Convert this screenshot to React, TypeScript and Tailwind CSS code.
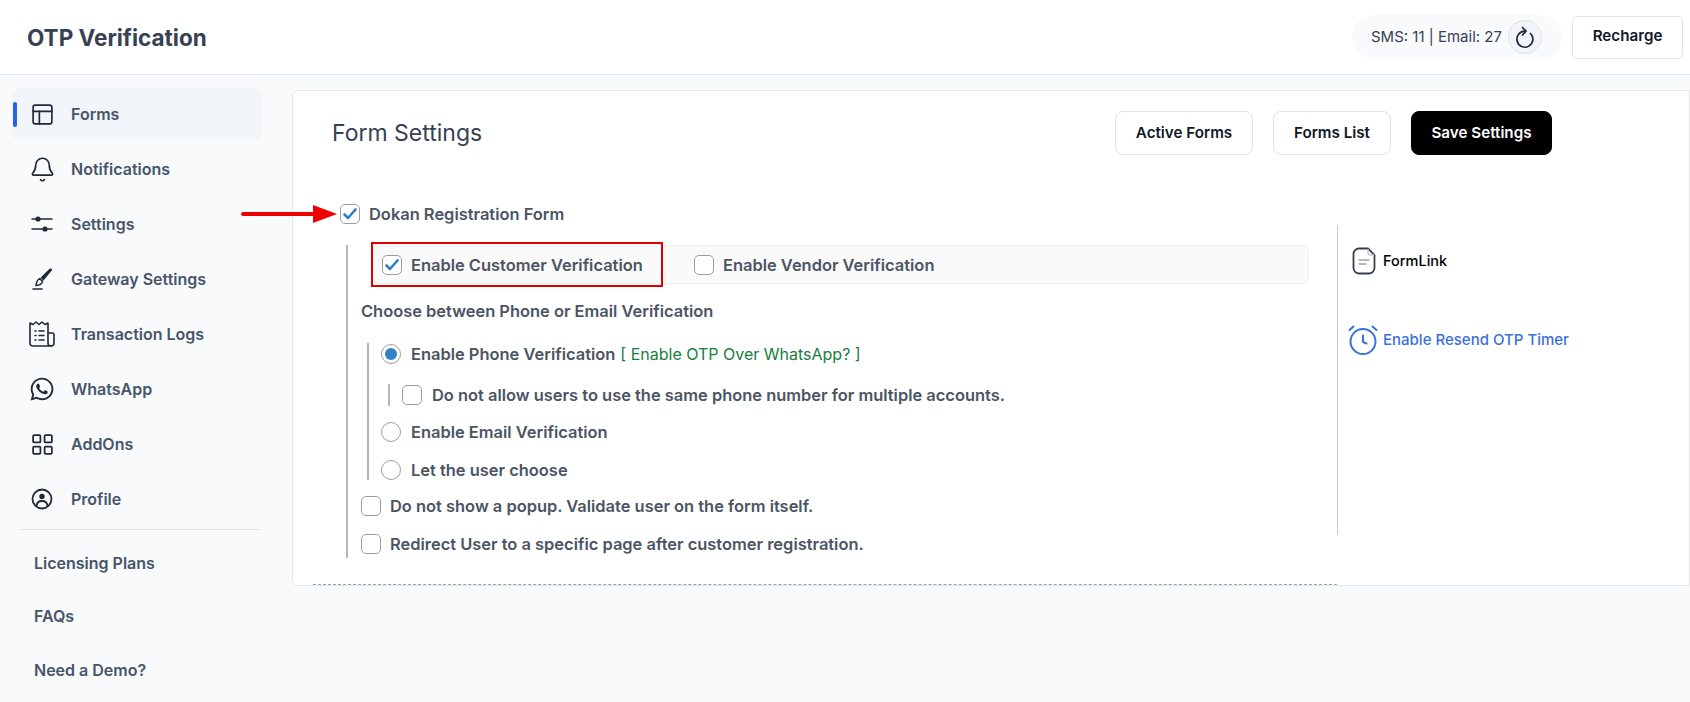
import React from "react";
import { Bell, LayoutGrid, PanelsTopLeft } from "lucide-react";
import { FaWhatsapp } from "react-icons/fa";

const Sliders = () => (
  <svg width="22" height="22" viewBox="0 0 22 22" fill="none" stroke="#1f2937" strokeWidth="1.5" strokeLinecap="round">
    <path d="M1 6h20M1 16h20" />
    <circle cx="7" cy="6" r="2.6" fill="#1f2937" stroke="none" />
    <circle cx="14" cy="16" r="2.6" fill="#1f2937" stroke="none" />
  </svg>
);
const Brush = () => (
  <svg width="22" height="22" viewBox="0 0 22 22" fill="none">
    <path d="M20 0.5c1 .5 1.3 1.2.8 2L12.5 12.5 9.5 9.8 18.3 1c.5-.4 1-.7 1.7-.5z" fill="#1f2937" />
    <path d="M8.6 10.6l3 2.8c-.6 2.4-3 4-6.6 4.1.4-3 1.4-6 3.6-6.9z" fill="none" stroke="#1f2937" strokeWidth="1.5" strokeLinejoin="round" />
    <path d="M2 21h9" stroke="#1f2937" strokeWidth="1.6" strokeLinecap="round" />
  </svg>
);
const Receipt = () => (
  <svg width="28" height="28" viewBox="0 0 28 28" fill="none" stroke="#1f2937" strokeWidth="1.6" strokeLinecap="round" strokeLinejoin="round">
    <path d="M2 3v20a3 3 0 0 0 3 3h18a3 3 0 0 1-3-3V3l-3 1.5L14 2l-3 2.5L8 2 5 4.500z" />
    <path d="M20 13h4.500a1.500 1.500 0 0 1 1.500 1.500V23a3 3 0 0 1-3 3" />
    <path d="M7 11h1M11 11h5M7 15.500h1M11 15.500h5M7 20h1M11 20h5" />
  </svg>
);
const Profile = () => (
  <svg width="22" height="22" viewBox="0 0 22 22" fill="none" stroke="#1f2937" strokeWidth="1.8">
    <circle cx="11" cy="11" r="9.500" />
    <circle cx="11" cy="8.500" r="1.800" fill="#1f2937" />
    <path d="M5.500 18c.3-3.500 2.500-5 5.500-5s5.200 1.500 5.500 5" />
  </svg>
);
const Refresh = () => (
  <svg width="24" height="24" viewBox="0 0 24 24" fill="none" stroke="#1f2937" strokeWidth="1.700" strokeLinecap="round" strokeLinejoin="round">
    <path d="M17.500 8.500A8 8 0 1 1 12 6.200" />
    <path d="M9.500 2.500L13 6.200 9.500 10" />
  </svg>
);
const FileIcon = () => (
  <svg width="24" height="28" viewBox="0 0 24 28" fill="none" className="shrink-0">
    <path d="M7 1.500h9l6.500 6.500v13a5.500 5.500 0 0 1-5.500 5.500H7A5.500 5.500 0 0 1 1.500 21V7A5.500 5.500 0 0 1 7 1.500z" stroke="#374151" strokeWidth="1.800" />
    <path d="M16 2v3.500A2.500 2.500 0 0 0 18.500 8H22" stroke="#c4c7cc" strokeWidth="1.500" />
    <path d="M7 13h10M7 17h7" stroke="#9ca3af" strokeWidth="1.500" strokeLinecap="round" />
  </svg>
);
const Alarm = () => (
  <svg width="30" height="30" viewBox="0 0 30 30" fill="none" stroke="#3b6fdc" strokeWidth="2" strokeLinecap="round" strokeLinejoin="round" className="shrink-0">
    <circle cx="15" cy="16.500" r="12.500" />
    <path d="M15 10.500v6.500l3.500 1.500" />
    <path d="M1.500 5L5.500 1.500M28.500 5L24.500 1.500" />
  </svg>
);

const Check = ({ checked = false }: { checked?: boolean }) => (
  <span className="flex h-[20px] w-[20px] shrink-0 items-center justify-center rounded-[5px] border border-[#9a9ea6] bg-white">
    {checked && (
      <svg width="14" height="12" viewBox="0 0 14 12" fill="none" stroke="#2f7fc9" strokeWidth="2.600" strokeLinecap="round" strokeLinejoin="round">
        <path d="M1.500 6.500l3.500 3.500 7.500-8.500" />
      </svg>
    )}
  </span>
);
const Radio = ({ checked = false }: { checked?: boolean }) => (
  <span className="flex h-[20px] w-[20px] shrink-0 items-center justify-center rounded-full border border-[#9a9ea6] bg-white">
    {checked && <span className="h-[12px] w-[12px] rounded-full bg-[#2f7fc9]" />}
  </span>
);

const Nav = ({ icon, label, active = false }: { icon: React.ReactNode; label: string; active?: boolean }) => (
  <div className={`relative flex h-[50px] items-center rounded-md ${active ? "bg-[#f1f4f9]" : ""}`}>
    {active && <span className="absolute left-[1px] top-[13px] h-[25px] w-[4px] rounded bg-[#2563eb]" />}
    <span className="flex w-[60px] shrink-0 items-center justify-center">{icon}</span>
    <span className="-ml-[1px] text-[16px] font-semibold text-[#475569]">{label}</span>
  </div>
);

const Btn = ({ children, w, dark = false }: { children: React.ReactNode; w: string; dark?: boolean }) => (
  <button className={`h-[44px] ${w} rounded-lg border text-[15.200px] font-semibold ${dark ? "border-black bg-black text-white" : "border-[#dfe3e8] bg-white text-[#111827]"}`}>
    {children}
  </button>
);

const Label = ({ children }: { children: React.ReactNode }) => (
  <span className="text-[16.450px] font-semibold leading-[20px] text-[#4b5563]">{children}</span>
);

const Extra = ({ children }: { children: React.ReactNode }) => (
  <div className="flex h-[53.500px] items-center text-[16px] font-semibold text-[#475569]">{children}</div>
);

export default function App() {
  return (
    <div className="flex h-[702px] w-[1690px] flex-col overflow-hidden bg-[#f8fafc] font-['Inter',sans-serif]">
      <header className="flex h-[75px] shrink-0 items-center border-b border-[#e5e7eb] bg-white pl-[27px] pr-[7px]">
        <h1 className="flex-1 pt-[1px] text-[22.500px] font-bold text-[#374151]">OTP Verification</h1>
        <div className="mr-[10px] flex h-[44px] w-[210px] items-center rounded-full bg-[#f8fafc] pl-[19px]">
          <span className="text-[15px] text-[#374151]">SMS: 11 | Email: 27</span>
          <span className="ml-[6px] flex h-[34px] w-[34px] items-center justify-center rounded-full border border-[#dfe3e8] bg-[#f1f4f9]">
            <Refresh />
          </span>
        </div>
        <button className="h-[43px] w-[111px] rounded-md border border-[#e0e3e8] bg-white pb-[2px] text-[15.200px] font-semibold text-[#111827]">Recharge</button>
      </header>
      <div className="flex flex-1">
        <aside className="w-[292px] shrink-0 pl-[12px] pr-[30px] pt-[14px]">
          <nav className="flex flex-col gap-[5px]">
            <Nav active icon={<PanelsTopLeft size={25} color="#1f2937" strokeWidth={1.6} />} label="Forms" />
            <Nav icon={<Bell size={27} color="#1f2937" strokeWidth={1.500} />} label="Notifications" />
            <Nav icon={<Sliders />} label="Settings" />
            <Nav icon={<Brush />} label="Gateway Settings" />
            <Nav icon={<Receipt />} label="Transaction Logs" />
            <Nav icon={<FaWhatsapp size={26} color="#1f2937" />} label="WhatsApp" />
            <Nav icon={<LayoutGrid size={25} color="#1f2937" strokeWidth={1.700} />} label="AddOns" />
            <Nav icon={<Profile />} label="Profile" />
          </nav>
          <div className="ml-[6px] mt-[5px] border-t border-[#e5e7eb] pl-[16px] pt-[6px]">
            <Extra>Licensing Plans</Extra>
            <Extra>FAQs</Extra>
            <Extra>Need a Demo?</Extra>
          </div>
        </aside>
        <main className="mt-[15px] flex h-[496px] flex-1 flex-col rounded-l-md border border-[#e5e7eb] bg-white">
          <div className="mt-[20px] flex h-[44px] items-center justify-between pl-[39px] pr-[137px]">
            <h2 className="text-[23px] font-normal text-[#374151]">Form Settings</h2>
            <div className="flex gap-[20px]">
              <Btn w="w-[138px]">Active Forms</Btn>
              <Btn w="w-[118px]">Forms List</Btn>
              <Btn w="w-[141px]" dark>Save Settings</Btn>
            </div>
          </div>

          <div className="relative ml-[47px] mt-[49px] flex h-[20px] items-center gap-[9px]">
            <svg width="96" height="20" viewBox="0 0 96 20" className="absolute left-[-99px] top-0">
              <path d="M2 10h74" stroke="#ee0000" strokeWidth="4" strokeLinecap="round" />
              <path d="M72 1l24 9-24 9z" fill="#ee0000" />
            </svg>
            <Check checked />
            <Label>Dokan Registration Form</Label>
          </div>

          <div className="mt-[1px] flex h-[310px]">
            <div className="w-[1044px] shrink-0 pl-[53px] pt-[20px]">
              <div className="h-[313px] border-l-2 border-[#b5b5b5] pl-[13px]">
                <div className="ml-[11px] flex h-[39px] w-[937px] items-center rounded-md border border-[#f0f0f0] bg-[#fafafa]">
                  <div className="-ml-[2px] flex h-[45px] w-[292px] shrink-0 items-center gap-[9px] border-2 border-[#e00000] pl-[9px]">
                    <Check checked />
                    <Label>Enable Customer Verification</Label>
                  </div>
                  <div className="ml-[31px] flex items-center gap-[9px]">
                    <Check />
                    <Label>Enable Vendor Verification</Label>
                  </div>
                </div>
                <div className="mt-[17px] flex h-[20px] items-center"><Label>Choose between Phone or Email Verification</Label></div>
                <div className="ml-[6px] mt-[22px] h-[137px] border-l-2 border-[#b5b5b5] pl-[12px] pt-[1px]">
                  <div className="flex h-[20px] items-center gap-[10px]">
                    <Radio checked />
                    <Label>Enable Phone Verification</Label>
                    <span className="-ml-[5px] text-[16px] text-[#15803d]">[ Enable OTP Over WhatsApp? ]</span>
                  </div>
                  <div className="mt-[20px] flex h-[22px] items-center">
                    <span className="ml-[7px] mr-[12px] h-[22px] w-[2px] bg-[#b5b5b5]" />
                    <Check />
                    <span className="ml-[10px] flex"><Label>Do not allow users to use the same phone number for multiple accounts.</Label></span>
                  </div>
                  <div className="mt-[16px] flex h-[20px] items-center gap-[10px]">
                    <Radio />
                    <Label>Enable Email Verification</Label>
                  </div>
                  <div className="mt-[18px] flex h-[20px] items-center gap-[10px]">
                    <Radio />
                    <Label>Let the user choose</Label>
                  </div>
                </div>
                <div className="mt-[16px] flex h-[20px] items-center gap-[9px]">
                  <Check />
                  <Label>Do not show a popup. Validate user on the form itself.</Label>
                </div>
                <div className="mt-[18px] flex h-[20px] items-center gap-[9px]">
                  <Check />
                  <Label>Redirect User to a specific page after customer registration.</Label>
                </div>
              </div>
            </div>
            <div className="h-[310px] w-[340px] border-l border-[#c9c9c9] pl-[10px]">
              <div className="mt-[22px] flex items-center gap-[7px] pl-[4px] text-[14.500px] font-medium text-black">
                <FileIcon />
                <span>FormLink</span>
              </div>
              <div className="mt-[50px] flex items-center gap-[5px] text-[15px] font-medium text-[#3b6fdc]">
                <Alarm />
                <span>Enable Resend OTP Timer</span>
              </div>
            </div>
          </div>
          <div className="ml-[20px] mt-auto w-[1024px] border-t border-dashed border-[#9ca3af]" />
        </main>
      </div>
    </div>
  );
}
